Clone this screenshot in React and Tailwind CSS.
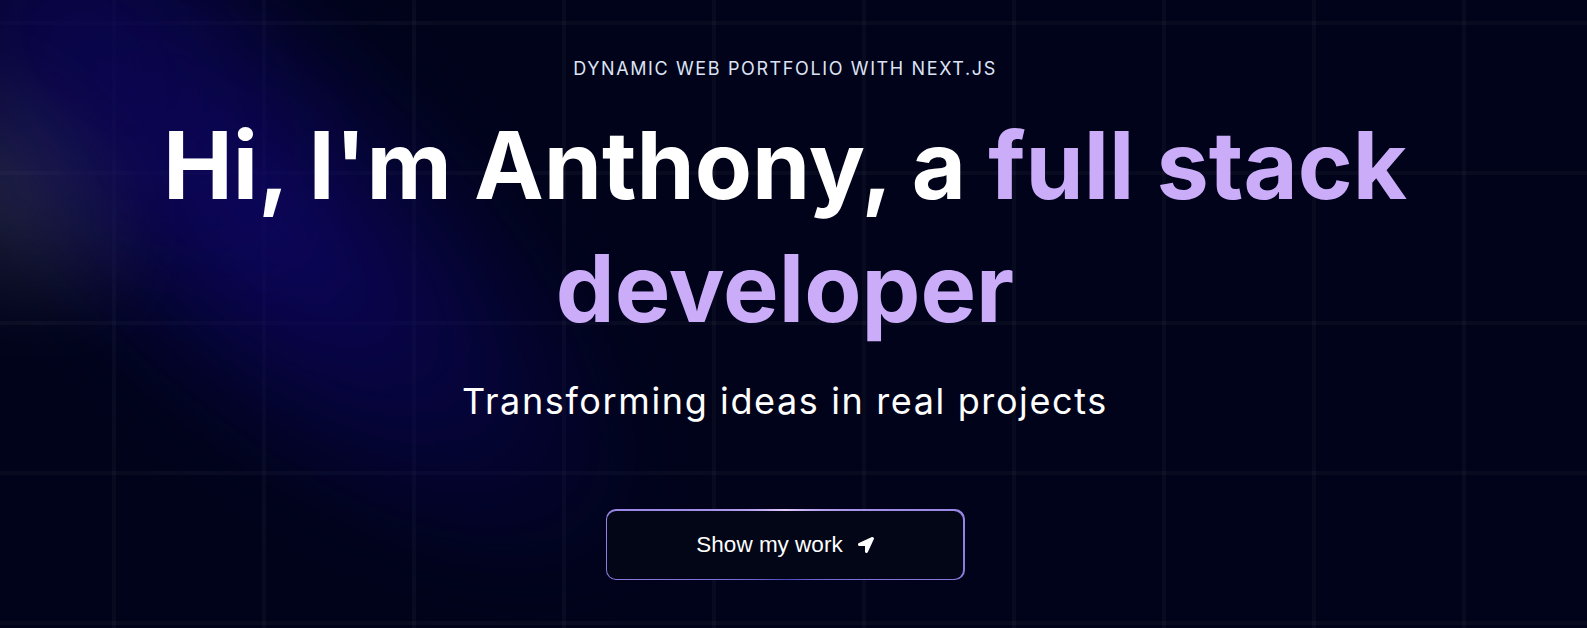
import React from 'react';
import { FaLocationArrow } from 'react-icons/fa';

// Hero section: grid backdrop, spotlight glows, headline and magic button
function MagicButton({ title, icon }) {
  return (
    <button className="relative inline-flex h-[71px] w-[359px] overflow-hidden rounded-[10px] p-[1.5px] focus:outline-none">
      <span className="absolute inset-0 bg-[conic-gradient(from_0deg_at_50%_50%,#E2CBFF_0%,#9a86e6_22%,#4a48c0_50%,#9a86e6_78%,#E2CBFF_100%)]" />
      <span className="relative inline-flex h-full w-full items-center justify-center gap-[15px] rounded-[9px] bg-[#020617] font-['Liberation_Sans',Arial,sans-serif] text-[22.5px] text-white">
        {title}
        {icon}
      </span>
    </button>
  );
}

export default function App() {
  return (
    <div className="relative h-[628px] w-full overflow-hidden bg-[#000319] font-['Inter',sans-serif]">
      <div className="pointer-events-none absolute inset-0 bg-[linear-gradient(to_right,rgba(255,255,255,0.032)_4px,transparent_4px),linear-gradient(to_bottom,rgba(255,255,255,0.032)_4px,transparent_4px)] bg-[size:150px_150px] bg-[position:112px_21px]" />

      {/* spotlights */}
      <div className="pointer-events-none absolute -left-[260px] top-[10px] h-[420px] w-[1040px] rotate-[42deg] rounded-full bg-[radial-gradient(ellipse_at_center,rgba(16,6,110,0.85),rgba(10,4,85,0.4)_45%,transparent_70%)] blur-2xl" />
      <div className="pointer-events-none absolute -left-[200px] -top-[120px] h-[360px] w-[600px] rotate-[42deg] rounded-full bg-[radial-gradient(ellipse_at_center,rgba(14,6,90,0.6),transparent_70%)] blur-2xl" />
      <div className="pointer-events-none absolute -left-[180px] top-[60px] h-[260px] w-[360px] rotate-[40deg] rounded-full bg-[radial-gradient(ellipse_at_center,rgba(140,140,165,0.22),transparent_70%)] blur-xl" />

      <div className="relative z-10 flex w-[1570px] flex-col items-center pt-[55px]">
        <p className="text-center text-[18px] leading-[27px] tracking-[0.09em] text-[#dde3f5] uppercase">
          Dynamic Web Portfolio with Next.js
        </p>
        <h1 className="mt-[22px] max-w-[1320px] text-center text-[93.5px] leading-[123px] font-bold text-white">
          Hi, I'm Anthony, a <span className="text-[#CBACF9]">full stack developer</span>
        </h1>
        <p className="mt-[27px] text-center text-[36px] leading-[48px] tracking-[0.045em] text-white">
          Transforming ideas in real projects
        </p>
        <div className="mt-[84px]">
          <MagicButton title="Show my work" icon={<FaLocationArrow className="h-4 w-4" />} />
        </div>
      </div>
    </div>
  );
}
